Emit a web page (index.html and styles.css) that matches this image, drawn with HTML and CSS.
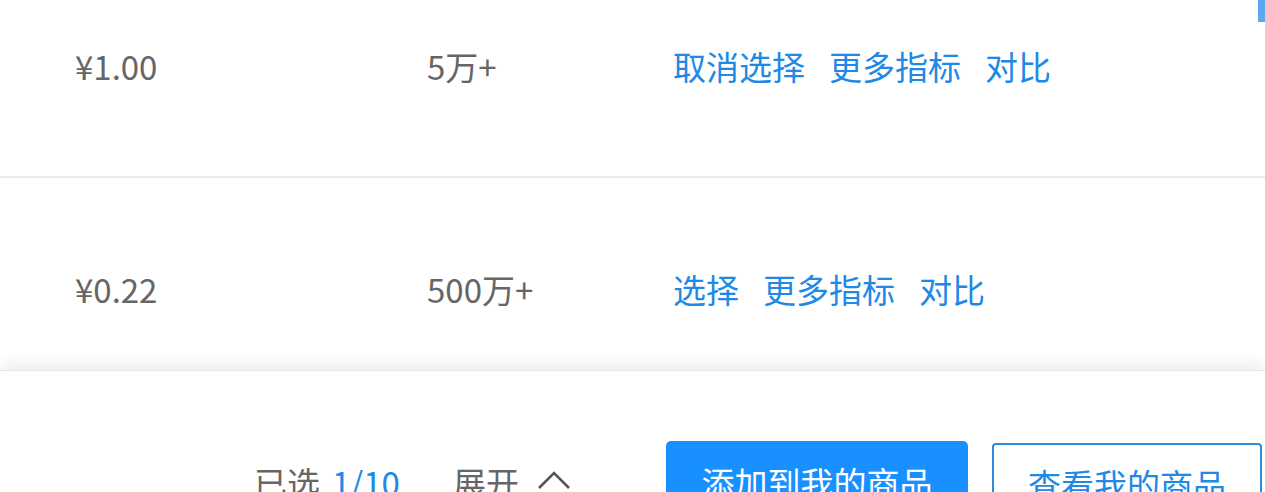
FILE: index.html
```html
<!DOCTYPE html>
<html lang="zh-CN">
<head>
<meta charset="utf-8">
<title>商品选择</title>
<link rel="stylesheet" href="styles.css">
</head>
<body>
<div class="page">
  <div class="scroll-thumb"></div>
  <div class="list">
    <div class="row row-first">
      <div class="cell price">¥1.00</div>
      <div class="cell sales">5万+</div>
      <div class="cell actions">
        <a class="link">取消选择</a>
        <a class="link">更多指标</a>
        <a class="link">对比</a>
      </div>
    </div>
    <div class="row">
      <div class="cell price">¥0.22</div>
      <div class="cell sales">500万+</div>
      <div class="cell actions">
        <a class="link">选择</a>
        <a class="link">更多指标</a>
        <a class="link">对比</a>
      </div>
    </div>
  </div>
  <div class="footer">
    <div class="selected">已选 <span class="count">1/10</span></div>
    <div class="expand">展开
      <svg class="chevron" viewBox="0 0 34 20" width="34" height="20"><path d="M2 18 L17 3 L32 18" fill="none" stroke="#555" stroke-width="2.6"/></svg>
    </div>
    <button class="btn btn-primary">添加到我的商品</button>
    <button class="btn btn-outline">查看我的商品</button>
  </div>
</div>
</body>
</html>
```

FILE: styles.css
```css
* { box-sizing: border-box; }
html, body { margin: 0; padding: 0; background: #fff; }
body {
  font-family: "Noto Sans CJK SC", "Noto Sans", sans-serif;
  font-size: 33px;
  color: #666;
}
.page {
  position: relative;
  width: 1265px;
  height: 492px;
  overflow: hidden;
  display: flex;
  flex-direction: column;
}
.scroll-thumb {
  position: absolute;
  top: 0;
  right: 0;
  width: 7px;
  height: 22px;
  background: #5aa8f2;
  z-index: 3;
}
.list {
  flex: 1;
  min-height: 0;
  overflow: hidden;
}
.row {
  display: flex;
  align-items: center;
  height: 224px;
  border-bottom: 2px solid #ebebeb;
}
.row-first {
  margin-top: -45px;
  height: 223px;
}
.cell { white-space: nowrap; }
.price { width: 427px; padding-left: 75px; }
.sales { width: 246px; }
.actions { display: flex; gap: 24px; }
.link { color: #2089e6; cursor: pointer; }
.footer {
  position: relative;
  z-index: 2;
  height: 122px;
  flex: none;
  background: #fff;
  box-shadow: 0 -6px 14px rgba(0, 0, 0, 0.07);
  border-top: 1px solid #e6e6e6;
  display: flex;
  align-items: flex-start;
  padding: 70px 3px 0 254px;
}
.selected, .expand {
  height: 82px;
  display: flex;
  align-items: center;
  color: #666;
}
.count { color: #2089e6; margin-left: 12px; }
.expand { margin-left: 53px; gap: 18px; }
.chevron { margin-top: -4px; }
.btn {
  font-family: inherit;
  font-size: 33px;
  height: 88px;
  border-radius: 5px;
  padding: 0 0 6px;
  cursor: pointer;
}
.btn-primary {
  margin-left: auto;
  width: 302px;
  background: #1890ff;
  border: none;
  color: #fff;
}
.btn-outline {
  margin-left: 24px;
  margin-top: 2px;
  width: 270px;
  background: #fff;
  border: 2px solid #2a8be0;
  color: #2089e6;
  border-radius: 4px;
}
```
